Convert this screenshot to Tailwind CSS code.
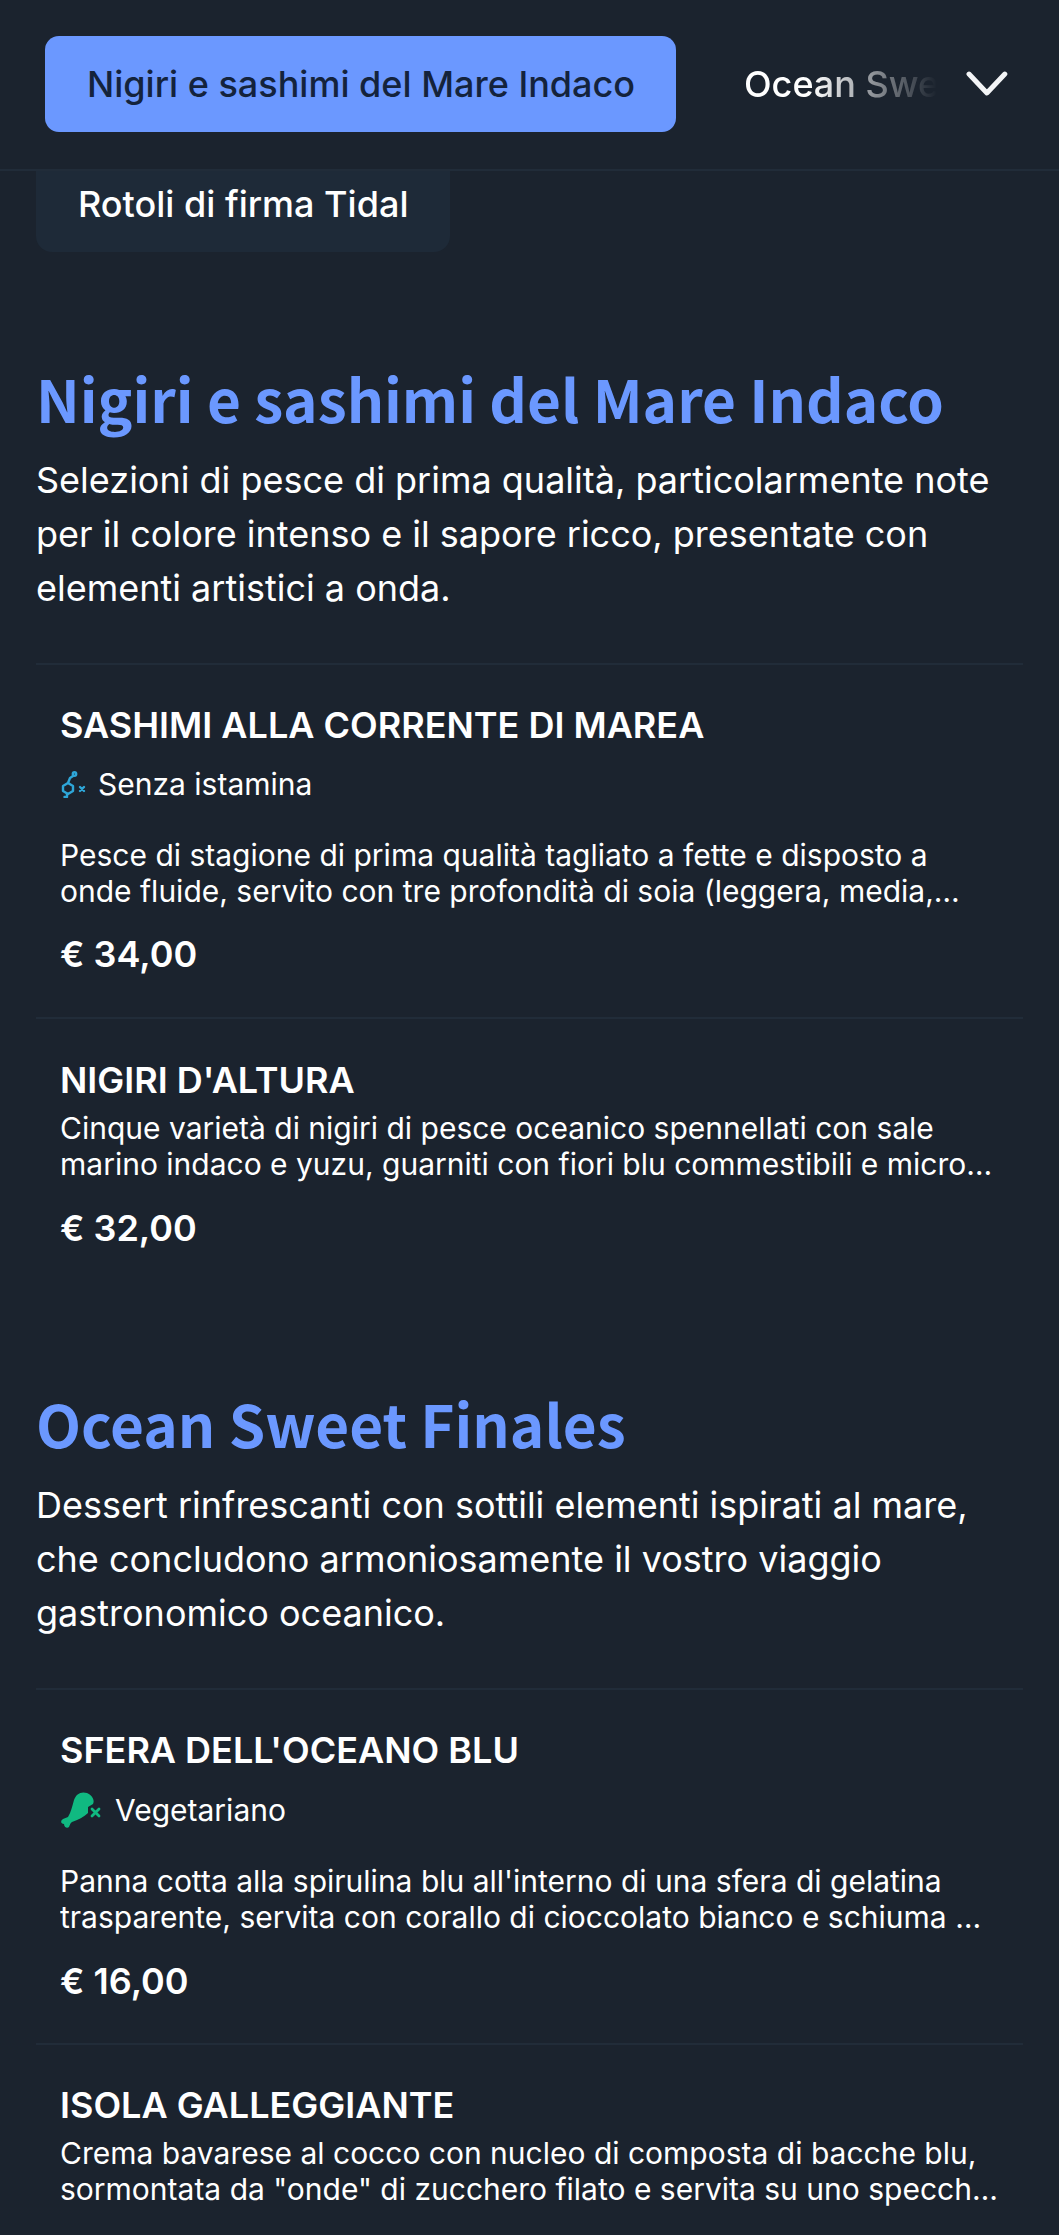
<!DOCTYPE html>
<html lang="it">
<head>
<meta charset="UTF-8">
<title>Menu</title>
<script src="https://cdn.jsdelivr.net/npm/@tailwindcss/browser@4"></script>
</head>
<body class="bg-[#1b232e] font-['Inter',sans-serif] text-white h-[2235px] overflow-hidden">
  <!-- category nav -->
  <header class="h-[171px] border-b-2 border-[#212c39] flex items-center pl-[45px] pr-[51px]">
    <div class="shrink-0 w-[631px] h-[96px] mt-[-1px] rounded-[14px] bg-[#6b98ff] text-[#14233c] text-[36px] font-medium flex items-center pl-[42px]">Nigiri e sashimi del Mare Indaco</div>
    <div class="ml-[68px] w-[194px] overflow-hidden whitespace-nowrap text-[36px] font-medium mt-[-1px] [mask-image:linear-gradient(to_right,#000_35%,transparent_100%)]">Ocean Sweet Finales</div>
    <svg class="ml-[29px] mt-[-3px] w-[42px] h-[26px]" viewBox="0 0 42 26" fill="none" stroke="#f3f4f6" stroke-width="5" stroke-linecap="round" stroke-linejoin="round"><path d="M3 4 L21 23 L39 4"/></svg>
  </header>
  <div class="ml-[36px] w-[414px] h-[81px] rounded-b-[16px] bg-[#1e2a38] text-[36px] leading-[44px] font-medium pl-[42px] pt-[11px]">Rotoli di firma Tidal</div>

  <main class="px-[36px]">
    <section class="mt-[106px]">
      <h2 class="font-['Noto_Sans_CJK_JP',sans-serif] font-bold text-[#6b98ff] text-[58.5px] leading-[80px]">Nigiri e sashimi del Mare Indaco</h2>
      <p class="mt-[15px] text-[36px] leading-[54px]">Selezioni di pesce di prima qualità, particolarmente note per il colore intenso e il sapore ricco, presentate con elementi artistici a onda.</p>
      <div class="mt-[48px]">
        <article class="border-t-2 border-[#212c39] px-[24px] pt-[38px] h-[354px]">
          <h3 class="text-[36px] font-semibold leading-[44px] uppercase">Sashimi alla corrente di marea</h3>
          <div class="mt-[17px] flex items-center gap-[12px] text-[30px] leading-[40px]">
            <svg class="w-[26px] h-[27px]" viewBox="0 0 26 27" fill="none" stroke="#2ea6d8" stroke-width="2.4" stroke-linejoin="round" stroke-linecap="round"><path d="M8 12 L13 15 V20 L8 23 L3 20 V15 Z"/><path d="M8 12 L10 7 L13 5"/><circle cx="14.5" cy="3" r="1.7"/><path d="M7 23 V26 H4.5"/><path d="M20 16 L24 20 M24 16 L20 20"/></svg>
            <span>Senza istamina</span>
          </div>
          <p class="mt-[33px] text-[30px] leading-[36px] line-clamp-2">Pesce di stagione di prima qualità tagliato a fette e disposto a onde fluide, servito con tre profondità di soia (leggera, media, scura) e wasabi fresco grattugiato al momento</p>
          <p class="mt-[23px] text-[36px] leading-[44px] font-semibold">€ 34,00</p>
        </article>
        <article class="border-t-2 border-[#212c39] px-[24px] pt-[39px]">
          <h3 class="text-[36px] font-semibold leading-[44px] uppercase">Nigiri d'altura</h3>
          <p class="mt-[8px] text-[30px] leading-[36px] line-clamp-2">Cinque varietà di nigiri di pesce oceanico spennellati con sale marino indaco e yuzu, guarniti con fiori blu commestibili e micro erbe di stagione raccolte a mano</p>
          <p class="mt-[24px] text-[36px] leading-[44px] font-semibold">€ 32,00</p>
        </article>
      </div>
    </section>

    <section class="mt-[133px]">
      <h2 class="font-['Noto_Sans_CJK_JP',sans-serif] font-bold text-[#6b98ff] text-[58.5px] leading-[80px]">Ocean Sweet Finales</h2>
      <p class="mt-[15px] text-[36px] leading-[54px]">Dessert rinfrescanti con sottili elementi ispirati al mare, che concludono armoniosamente il vostro viaggio gastronomico oceanico.</p>
      <div class="mt-[48px]">
        <article class="border-t-2 border-[#212c39] px-[24px] pt-[38px] h-[355px]">
          <h3 class="text-[36px] font-semibold leading-[44px] uppercase">Sfera dell'oceano blu</h3>
          <div class="mt-[18px] flex items-center gap-[13px] text-[30px] leading-[40px]">
            <svg class="w-[42px] h-[37px]" viewBox="0 0 42 37" fill="#10b981"><path d="M27 1 C21 -1 16 2 14 8 C12 15 11 20 8 25 L3 27 C0 29 1 32 4 32 C4 35 7 37 9 35 C10 33 10 31 12 30 C18 28 24 25 28 21 L28 15 L33 12 C35 8 32 3 27 1 Z"/><path d="M32 17 L39 24 M39 17 L32 24" stroke="#10b981" stroke-width="2.8" stroke-linecap="round" fill="none"/></svg>
            <span>Vegetariano</span>
          </div>
          <p class="mt-[33px] text-[30px] leading-[36px] line-clamp-2">Panna cotta alla spirulina blu all'interno di una sfera di gelatina trasparente, servita con corallo di cioccolato bianco e schiuma di cocco salato al mare profondo</p>
          <p class="mt-[24px] text-[36px] leading-[44px] font-semibold">€ 16,00</p>
        </article>
        <article class="border-t-2 border-[#212c39] px-[24px] pt-[38px]">
          <h3 class="text-[36px] font-semibold leading-[44px] uppercase">Isola galleggiante</h3>
          <p class="mt-[8px] text-[30px] leading-[36px] line-clamp-2">Crema bavarese al cocco con nucleo di composta di bacche blu, sormontata da "onde" di zucchero filato e servita su uno specchio di salsa alla vaniglia</p>
        </article>
      </div>
    </section>
  </main>
</body>
</html>
